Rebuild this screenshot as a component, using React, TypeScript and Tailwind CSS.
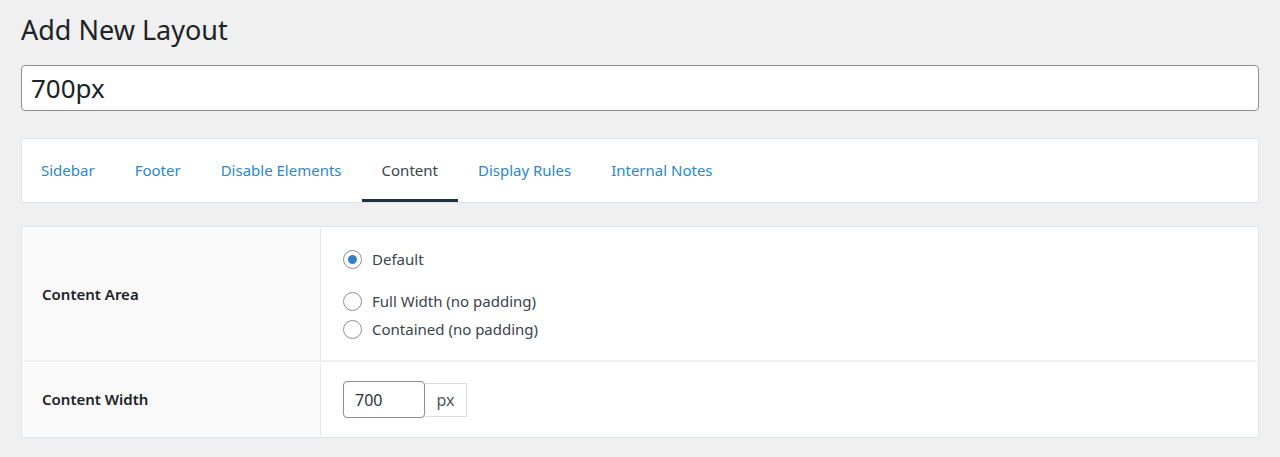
import React from "react";

const tabs = ["Sidebar", "Footer", "Disable Elements", "Content", "Display Rules", "Internal Notes"];

function Radio({ checked, label, className = "" }: { checked?: boolean; label: string; className?: string }) {
  return (
    <label className={"flex items-center h-[28px] " + className}>
      <span className="w-[19px] h-[19px] rounded-full border border-[#8c8f94] bg-white flex items-center justify-center shrink-0">
        {checked && <span className="w-[9px] h-[9px] rounded-full bg-[#3582c4]" />}
      </span>
      <span className="ml-[10px] text-[15px] text-[#3c434a]">{label}</span>
    </label>
  );
}

export default function App() {
  return (
    <div
      className="min-h-[457px] bg-[#f0f0f1] px-[21px] pt-[12px] pb-[18px]"
      style={{ fontFamily: '"Noto Sans", "Open Sans", sans-serif' }}
    >
      <h1 className="text-[27px] leading-[36px] text-[#1d2327] font-normal">Add New Layout</h1>
      <div className="mt-[17px] h-[46px] border border-[#8c8f94] rounded-[4px] bg-white flex items-center px-[9px]">
        <span className="text-[26px] text-[#1d2327] leading-none">700px</span>
      </div>

      <div className="mt-[27px] border border-[#dde3ea] bg-white h-[65px]">
        <div className="flex h-full -ml-[1px]">
          {tabs.map((t) => {
            const active = t === "Content";
            return (
              <div
                key={t}
                className={
                  "px-[20px] pt-[2px] flex items-center text-[15px] border-b-[3px] " +
                  (active ? "border-[#23303f] text-[#3c434a]" : "border-transparent text-[#2c88c8]")
                }
              >
                {t}
              </div>
            );
          })}
        </div>
      </div>

      <div className="mt-[23px] border border-[#dde3ea] bg-white p-[1px]">
        <div className="flex h-[134px] border-b-[2px] border-[#f0f0f1]">
          <div className="w-[298px] bg-[#f9f9f9] border-r border-[#e6e6e6] flex items-center pl-[19px] text-[15px] font-semibold text-[#1d2327]">
            Content Area
          </div>
          <div className="flex-1 ml-[1px] pl-[21px] pt-[17px]">
            <Radio checked label="Default" className="mb-[14px]" />
            <Radio label="Full Width (no padding)" />
            <Radio label="Contained (no padding)" />
          </div>
        </div>
        <div className="flex h-[73px] mt-[1px]">
          <div className="w-[298px] bg-[#f9f9f9] border-r border-[#e6e6e6] flex items-center pl-[19px] text-[15px] font-semibold text-[#1d2327]">
            Content Width
          </div>
          <div className="flex-1 ml-[1px] pl-[21px] flex items-center">
            <div className="w-[82px] h-[37px] border border-[#8c8f94] rounded-[4px] bg-white flex items-center px-[11px] text-[16px] text-[#2c3338]">
              700
            </div>
            <div className="w-[42px] h-[34px] border border-[#dcdcde] border-l-0 bg-white flex items-center justify-center text-[16px] text-[#50575e]">
              px
            </div>
          </div>
        </div>
      </div>
    </div>
  );
}
